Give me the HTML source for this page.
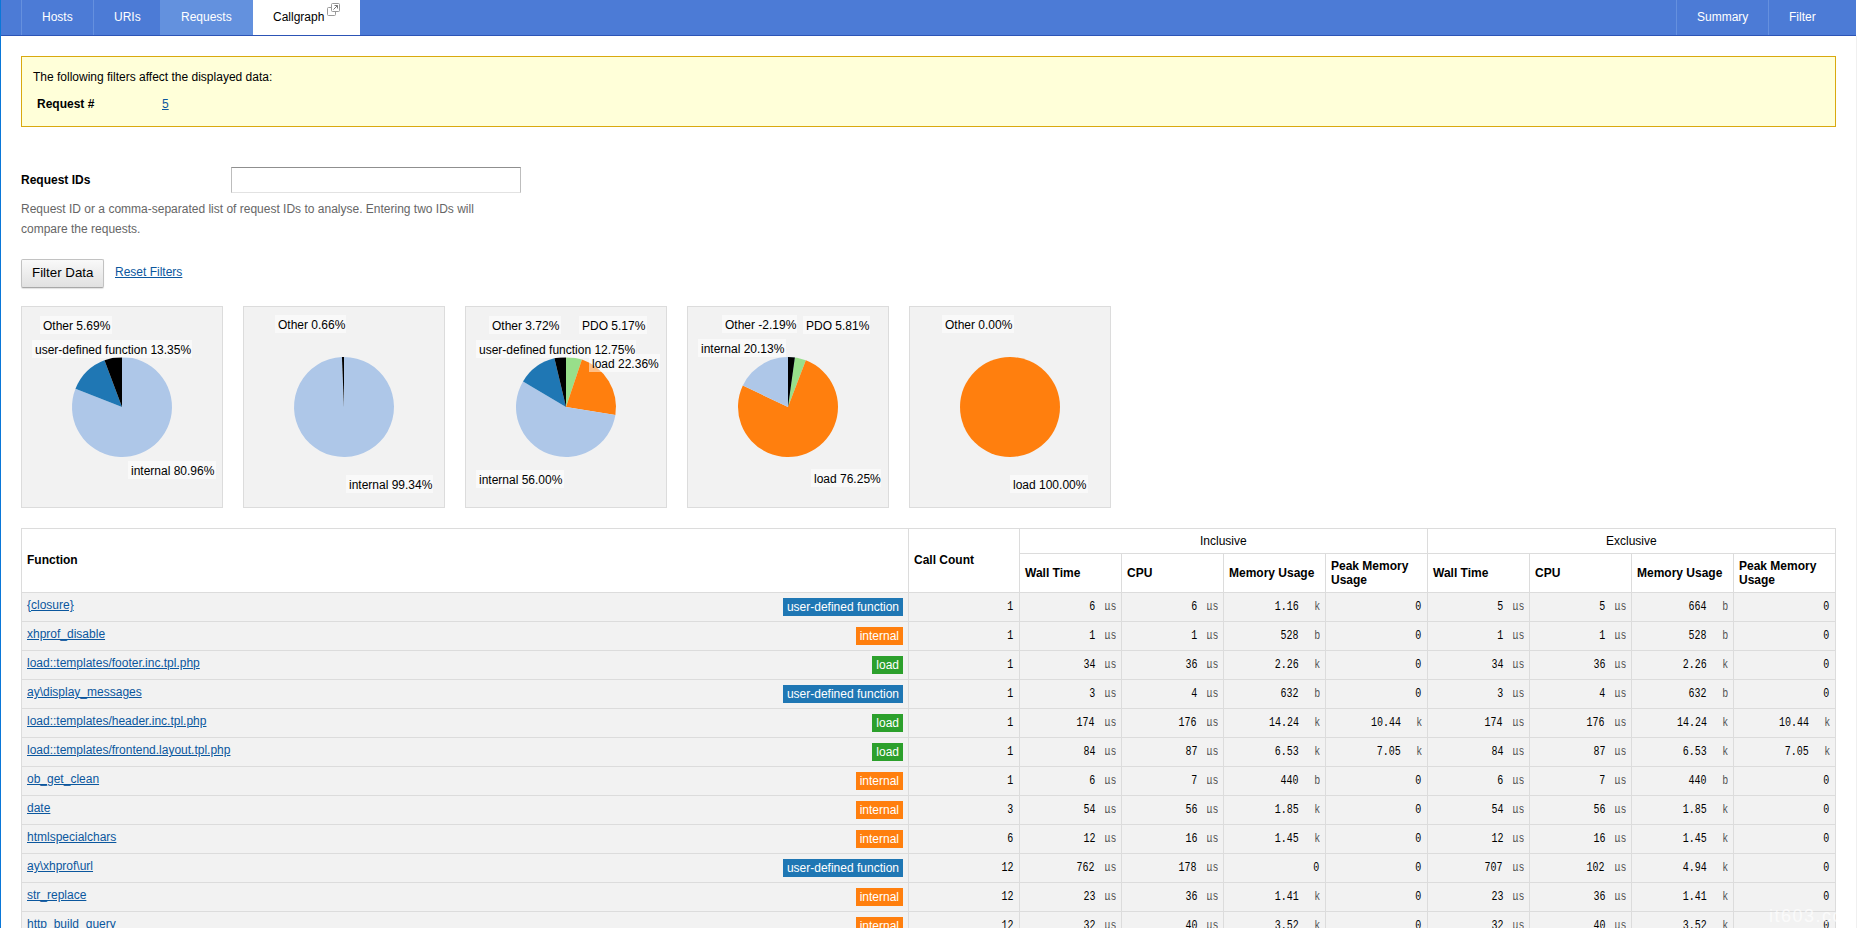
<!DOCTYPE html><html><head><meta charset="utf-8"><style>
*{margin:0;padding:0;box-sizing:border-box}
html,body{width:1857px;height:928px;overflow:hidden;background:#fff}
body{position:relative;font-family:"Liberation Sans", sans-serif;font-size:12px;color:#000}
.a{position:absolute;white-space:nowrap;line-height:14px}
a{color:#0b579e;text-decoration:underline}
.nav{position:absolute;left:1px;top:0;width:1855px;height:36px;background:#4c7bd6;border-bottom:1px solid #2c54b6}
.sep{position:absolute;top:0;width:1px;height:35px;background:#6590de}
.tab{position:absolute;top:10px;color:#fff;line-height:14px}
.yb{position:absolute;left:21px;top:56px;width:1815px;height:71px;background:#ffffd9;border:1px solid #d9a90f}
.chart{position:absolute;top:306px;width:202px;height:202px;background:#f2f2f2;border:1px solid #dcdcdc}
.lbl{position:absolute;height:18px;line-height:18px;padding:0 0 0 3px;background:rgba(255,255,255,0.5);white-space:nowrap;overflow:visible}
.row{position:absolute;left:21px;width:1815px;height:29px;background:#f2f2f2;border-top:1px solid #dcdcdc}
.vl{position:absolute;width:1px;background:#dcdcdc}
.num{position:absolute;font-family:"Liberation Mono", monospace;font-size:12px;transform:scaleX(0.8333);transform-origin:100% 50%;line-height:14px;white-space:nowrap;text-align:right}
.u{position:absolute;font-family:"Liberation Mono", monospace;font-size:12px;transform:scaleX(0.8333);transform-origin:100% 50%;line-height:14px;height:10px;overflow:hidden;color:#555;white-space:nowrap;text-align:right}
.badge{position:absolute;height:18px;line-height:18px;color:#fff;padding:0 4px;white-space:nowrap;font-size:12px}
.th{position:absolute;font-weight:bold;line-height:14px;white-space:nowrap}
</style></head><body><div style="position:absolute;left:0;top:0;width:1px;height:928px;background:#0a77d8"></div><div style="position:absolute;left:1856px;top:36px;width:1px;height:892px;background:#f0f0f0"></div><div class="nav"></div><div class="sep" style="left:21px"></div><div class="sep" style="left:93px"></div><div class="sep" style="left:1676px"></div><div class="sep" style="left:1768px"></div><div style="position:absolute;left:160px;top:0;width:93px;height:35px;background:#6391de"></div><div style="position:absolute;left:253px;top:0;width:107px;height:35px;background:#fff"></div><div class="tab" style="left:42px">Hosts</div><div class="tab" style="left:114px">URIs</div><div class="tab" style="left:181px">Requests</div><div class="tab" style="left:1697px">Summary</div><div class="tab" style="left:1789px">Filter</div><div class="tab" style="left:273px;color:#000">Callgraph</div><svg style="position:absolute;left:326px;top:2px" width="16" height="16" viewBox="0 0 16 16"><rect x="1.5" y="5.5" width="8" height="8" rx="1" fill="#fff" stroke="#999" stroke-width="1"/><rect x="5.5" y="1.5" width="8" height="8" rx="1" fill="#fff" stroke="#999" stroke-width="1"/><path d="M7.5 7.5 L11.5 3.5 M8.5 3.5 H11.5 V6.5" fill="none" stroke="#777" stroke-width="1"/></svg><div class="yb"></div><div class="a" style="left:33px;top:70px">The following filters affect the displayed data:</div><div class="a" style="left:37px;top:97px;font-weight:bold">Request #</div><div class="a" style="left:162px;top:97px"><a>5</a></div><div class="a" style="left:21px;top:173px;font-weight:bold">Request IDs</div><div style="position:absolute;left:231px;top:167px;width:290px;height:26px;border:1px solid #bdbdbd;border-top-color:#8f8f8f;border-bottom-color:#e2e2e2;background:#fff"></div><div class="a" style="left:21px;top:202px;color:#666;line-height:20px;top:199px">Request ID or a comma-separated list of request IDs to analyse. Entering two IDs will<br>compare the requests.</div><div style="position:absolute;left:21px;top:259px;width:83px;height:29px;border:1px solid #c2c2c2;border-bottom-color:#a8a8a8;border-radius:2px;background:linear-gradient(#f9f9f9,#e1e1e1);box-shadow:0 1px 1px rgba(0,0,0,0.12)"></div><div class="a" style="left:32px;top:265px;font-size:13.33px;line-height:16px">Filter Data</div><div class="a" style="left:115px;top:265px"><a>Reset Filters</a></div><div class="chart" style="left:21px"></div><svg style="position:absolute;left:0;top:0" width="1857" height="928"><path d="M122,407 L122.000,357.000 A50,50 0 1 1 75.465,388.711 Z" fill="#aec7e8"/><path d="M122,407 L75.465,388.711 A50,50 0 0 1 104.503,360.162 Z" fill="#1f77b4"/><path d="M122,407 L104.503,360.162 A50,50 0 0 1 122.000,357.000 Z" fill="#000000"/></svg><div class="lbl" style="left:40px;top:316px;width:72px"><span style="position:relative;top:1px">Other 5.69%</span></div><div class="lbl" style="left:32px;top:340px;width:160px"><span style="position:relative;top:1px">user-defined function 13.35%</span></div><div class="lbl" style="left:128px;top:461px;width:88px"><span style="position:relative;top:1px">internal 80.96%</span></div><div class="chart" style="left:243px"></div><svg style="position:absolute;left:0;top:0" width="1857" height="928"><path d="M344,407 L344.000,357.000 A50,50 0 1 1 341.927,357.043 Z" fill="#aec7e8"/><path d="M344,407 L341.927,357.043 A50,50 0 0 1 344.000,357.000 Z" fill="#000000"/></svg><div class="lbl" style="left:275px;top:315px;width:71px"><span style="position:relative;top:1px">Other 0.66%</span></div><div class="lbl" style="left:346px;top:475px;width:87px"><span style="position:relative;top:1px">internal 99.34%</span></div><div class="chart" style="left:465px"></div><svg style="position:absolute;left:0;top:0" width="1857" height="928"><path d="M566,407 L566.000,357.000 A50,50 0 0 1 581.958,359.615 Z" fill="#98df8a"/><path d="M566,407 L581.958,359.615 A50,50 0 0 1 615.370,414.915 Z" fill="#ff7f0e"/><path d="M566,407 L615.370,414.915 A50,50 0 1 1 523.011,381.467 Z" fill="#aec7e8"/><path d="M566,407 L523.011,381.467 A50,50 0 0 1 554.419,358.360 Z" fill="#1f77b4"/><path d="M566,407 L554.419,358.360 A50,50 0 0 1 566.000,357.000 Z" fill="#000000"/></svg><div class="lbl" style="left:489px;top:316px;width:72px"><span style="position:relative;top:1px">Other 3.72%</span></div><div class="lbl" style="left:579px;top:316px;width:68px"><span style="position:relative;top:1px">PDO 5.17%</span></div><div class="lbl" style="left:476px;top:340px;width:160px"><span style="position:relative;top:1px">user-defined function 12.75%</span></div><div class="lbl" style="left:589px;top:354px;width:71px"><span style="position:relative;top:1px">load 22.36%</span></div><div class="lbl" style="left:476px;top:470px;width:88px"><span style="position:relative;top:1px">internal 56.00%</span></div><div class="chart" style="left:687px"></div><svg style="position:absolute;left:0;top:0" width="1857" height="928"><path d="M788,407 L788.000,357.000 A50,50 0 0 1 805.850,360.295 Z" fill="#98df8a"/><path d="M788,407 L805.850,360.295 A50,50 0 1 1 742.839,385.541 Z" fill="#ff7f0e"/><path d="M788,407 L742.839,385.541 A50,50 0 0 1 794.858,357.473 Z" fill="#aec7e8"/><path d="M788,407 L788.000,357.000 A50,50 0 0 1 794.858,357.473 Z" fill="#000000"/></svg><div class="lbl" style="left:722px;top:315px;width:75px"><span style="position:relative;top:1px">Other -2.19%</span></div><div class="lbl" style="left:803px;top:316px;width:67px"><span style="position:relative;top:1px">PDO 5.81%</span></div><div class="lbl" style="left:698px;top:339px;width:88px"><span style="position:relative;top:1px">internal 20.13%</span></div><div class="lbl" style="left:811px;top:469px;width:70px"><span style="position:relative;top:1px">load 76.25%</span></div><div class="chart" style="left:909px"></div><svg style="position:absolute;left:0;top:0" width="1857" height="928"><circle cx="1010" cy="407" r="50" fill="#ff7f0e"/></svg><div class="lbl" style="left:942px;top:315px;width:72px"><span style="position:relative;top:1px">Other 0.00%</span></div><div class="lbl" style="left:1010px;top:475px;width:78px"><span style="position:relative;top:1px">load 100.00%</span></div><div style="position:absolute;left:21px;top:528px;width:1815px;height:64px;border:1px solid #dcdcdc;border-bottom:none;background:#fff"></div><div class="vl" style="left:908px;top:528px;height:64px"></div><div class="vl" style="left:1019px;top:528px;height:64px"></div><div class="vl" style="left:1427px;top:528px;height:64px"></div><div class="vl" style="left:1121px;top:553px;height:39px"></div><div class="vl" style="left:1223px;top:553px;height:39px"></div><div class="vl" style="left:1325px;top:553px;height:39px"></div><div class="vl" style="left:1529px;top:553px;height:39px"></div><div class="vl" style="left:1631px;top:553px;height:39px"></div><div class="vl" style="left:1733px;top:553px;height:39px"></div><div style="position:absolute;left:1019px;top:553px;width:816px;height:1px;background:#dcdcdc"></div><div class="a" style="left:1200px;top:534px">Inclusive</div><div class="a" style="left:1606px;top:534px">Exclusive</div><div class="th" style="left:27px;top:553px">Function</div><div class="th" style="left:914px;top:553px">Call Count</div><div class="th" style="left:1025px;top:566px">Wall Time</div><div class="th" style="left:1127px;top:566px">CPU</div><div class="th" style="left:1229px;top:566px">Memory Usage</div><div class="th" style="left:1331px;top:559px;line-height:14px">Peak Memory<br>Usage</div><div class="th" style="left:1433px;top:566px">Wall Time</div><div class="th" style="left:1535px;top:566px">CPU</div><div class="th" style="left:1637px;top:566px">Memory Usage</div><div class="th" style="left:1739px;top:559px;line-height:14px">Peak Memory<br>Usage</div><div class="row" style="top:592px"></div><div class="a" style="left:27px;top:598px"><a>{closure}</a></div><div class="badge" style="right:954px;top:598px;background:#1f77b4">user-defined function</div><div class="num" style="right:844px;top:600px">1</div><div class="num" style="right:762px;top:600px">6</div><div class="u" style="right:741px;top:600px">μs</div><div class="num" style="right:660px;top:600px">6</div><div class="u" style="right:639px;top:600px">μs</div><div class="num" style="right:558px;top:600px">1.16</div><div class="u" style="right:537px;top:600px">k</div><div class="num" style="right:436px;top:600px">0</div><div class="num" style="right:354px;top:600px">5</div><div class="u" style="right:333px;top:600px">μs</div><div class="num" style="right:252px;top:600px">5</div><div class="u" style="right:231px;top:600px">μs</div><div class="num" style="right:150px;top:600px">664</div><div class="u" style="right:129px;top:600px">b</div><div class="num" style="right:28px;top:600px">0</div><div class="row" style="top:621px"></div><div class="a" style="left:27px;top:627px"><a>xhprof_disable</a></div><div class="badge" style="right:954px;top:627px;background:#ff7f0e">internal</div><div class="num" style="right:844px;top:629px">1</div><div class="num" style="right:762px;top:629px">1</div><div class="u" style="right:741px;top:629px">μs</div><div class="num" style="right:660px;top:629px">1</div><div class="u" style="right:639px;top:629px">μs</div><div class="num" style="right:558px;top:629px">528</div><div class="u" style="right:537px;top:629px">b</div><div class="num" style="right:436px;top:629px">0</div><div class="num" style="right:354px;top:629px">1</div><div class="u" style="right:333px;top:629px">μs</div><div class="num" style="right:252px;top:629px">1</div><div class="u" style="right:231px;top:629px">μs</div><div class="num" style="right:150px;top:629px">528</div><div class="u" style="right:129px;top:629px">b</div><div class="num" style="right:28px;top:629px">0</div><div class="row" style="top:650px"></div><div class="a" style="left:27px;top:656px"><a>load::templates/footer.inc.tpl.php</a></div><div class="badge" style="right:954px;top:656px;background:#2ca02c">load</div><div class="num" style="right:844px;top:658px">1</div><div class="num" style="right:762px;top:658px">34</div><div class="u" style="right:741px;top:658px">μs</div><div class="num" style="right:660px;top:658px">36</div><div class="u" style="right:639px;top:658px">μs</div><div class="num" style="right:558px;top:658px">2.26</div><div class="u" style="right:537px;top:658px">k</div><div class="num" style="right:436px;top:658px">0</div><div class="num" style="right:354px;top:658px">34</div><div class="u" style="right:333px;top:658px">μs</div><div class="num" style="right:252px;top:658px">36</div><div class="u" style="right:231px;top:658px">μs</div><div class="num" style="right:150px;top:658px">2.26</div><div class="u" style="right:129px;top:658px">k</div><div class="num" style="right:28px;top:658px">0</div><div class="row" style="top:679px"></div><div class="a" style="left:27px;top:685px"><a>ay\display_messages</a></div><div class="badge" style="right:954px;top:685px;background:#1f77b4">user-defined function</div><div class="num" style="right:844px;top:687px">1</div><div class="num" style="right:762px;top:687px">3</div><div class="u" style="right:741px;top:687px">μs</div><div class="num" style="right:660px;top:687px">4</div><div class="u" style="right:639px;top:687px">μs</div><div class="num" style="right:558px;top:687px">632</div><div class="u" style="right:537px;top:687px">b</div><div class="num" style="right:436px;top:687px">0</div><div class="num" style="right:354px;top:687px">3</div><div class="u" style="right:333px;top:687px">μs</div><div class="num" style="right:252px;top:687px">4</div><div class="u" style="right:231px;top:687px">μs</div><div class="num" style="right:150px;top:687px">632</div><div class="u" style="right:129px;top:687px">b</div><div class="num" style="right:28px;top:687px">0</div><div class="row" style="top:708px"></div><div class="a" style="left:27px;top:714px"><a>load::templates/header.inc.tpl.php</a></div><div class="badge" style="right:954px;top:714px;background:#2ca02c">load</div><div class="num" style="right:844px;top:716px">1</div><div class="num" style="right:762px;top:716px">174</div><div class="u" style="right:741px;top:716px">μs</div><div class="num" style="right:660px;top:716px">176</div><div class="u" style="right:639px;top:716px">μs</div><div class="num" style="right:558px;top:716px">14.24</div><div class="u" style="right:537px;top:716px">k</div><div class="num" style="right:456px;top:716px">10.44</div><div class="u" style="right:435px;top:716px">k</div><div class="num" style="right:354px;top:716px">174</div><div class="u" style="right:333px;top:716px">μs</div><div class="num" style="right:252px;top:716px">176</div><div class="u" style="right:231px;top:716px">μs</div><div class="num" style="right:150px;top:716px">14.24</div><div class="u" style="right:129px;top:716px">k</div><div class="num" style="right:48px;top:716px">10.44</div><div class="u" style="right:27px;top:716px">k</div><div class="row" style="top:737px"></div><div class="a" style="left:27px;top:743px"><a>load::templates/frontend.layout.tpl.php</a></div><div class="badge" style="right:954px;top:743px;background:#2ca02c">load</div><div class="num" style="right:844px;top:745px">1</div><div class="num" style="right:762px;top:745px">84</div><div class="u" style="right:741px;top:745px">μs</div><div class="num" style="right:660px;top:745px">87</div><div class="u" style="right:639px;top:745px">μs</div><div class="num" style="right:558px;top:745px">6.53</div><div class="u" style="right:537px;top:745px">k</div><div class="num" style="right:456px;top:745px">7.05</div><div class="u" style="right:435px;top:745px">k</div><div class="num" style="right:354px;top:745px">84</div><div class="u" style="right:333px;top:745px">μs</div><div class="num" style="right:252px;top:745px">87</div><div class="u" style="right:231px;top:745px">μs</div><div class="num" style="right:150px;top:745px">6.53</div><div class="u" style="right:129px;top:745px">k</div><div class="num" style="right:48px;top:745px">7.05</div><div class="u" style="right:27px;top:745px">k</div><div class="row" style="top:766px"></div><div class="a" style="left:27px;top:772px"><a>ob_get_clean</a></div><div class="badge" style="right:954px;top:772px;background:#ff7f0e">internal</div><div class="num" style="right:844px;top:774px">1</div><div class="num" style="right:762px;top:774px">6</div><div class="u" style="right:741px;top:774px">μs</div><div class="num" style="right:660px;top:774px">7</div><div class="u" style="right:639px;top:774px">μs</div><div class="num" style="right:558px;top:774px">440</div><div class="u" style="right:537px;top:774px">b</div><div class="num" style="right:436px;top:774px">0</div><div class="num" style="right:354px;top:774px">6</div><div class="u" style="right:333px;top:774px">μs</div><div class="num" style="right:252px;top:774px">7</div><div class="u" style="right:231px;top:774px">μs</div><div class="num" style="right:150px;top:774px">440</div><div class="u" style="right:129px;top:774px">b</div><div class="num" style="right:28px;top:774px">0</div><div class="row" style="top:795px"></div><div class="a" style="left:27px;top:801px"><a>date</a></div><div class="badge" style="right:954px;top:801px;background:#ff7f0e">internal</div><div class="num" style="right:844px;top:803px">3</div><div class="num" style="right:762px;top:803px">54</div><div class="u" style="right:741px;top:803px">μs</div><div class="num" style="right:660px;top:803px">56</div><div class="u" style="right:639px;top:803px">μs</div><div class="num" style="right:558px;top:803px">1.85</div><div class="u" style="right:537px;top:803px">k</div><div class="num" style="right:436px;top:803px">0</div><div class="num" style="right:354px;top:803px">54</div><div class="u" style="right:333px;top:803px">μs</div><div class="num" style="right:252px;top:803px">56</div><div class="u" style="right:231px;top:803px">μs</div><div class="num" style="right:150px;top:803px">1.85</div><div class="u" style="right:129px;top:803px">k</div><div class="num" style="right:28px;top:803px">0</div><div class="row" style="top:824px"></div><div class="a" style="left:27px;top:830px"><a>htmlspecialchars</a></div><div class="badge" style="right:954px;top:830px;background:#ff7f0e">internal</div><div class="num" style="right:844px;top:832px">6</div><div class="num" style="right:762px;top:832px">12</div><div class="u" style="right:741px;top:832px">μs</div><div class="num" style="right:660px;top:832px">16</div><div class="u" style="right:639px;top:832px">μs</div><div class="num" style="right:558px;top:832px">1.45</div><div class="u" style="right:537px;top:832px">k</div><div class="num" style="right:436px;top:832px">0</div><div class="num" style="right:354px;top:832px">12</div><div class="u" style="right:333px;top:832px">μs</div><div class="num" style="right:252px;top:832px">16</div><div class="u" style="right:231px;top:832px">μs</div><div class="num" style="right:150px;top:832px">1.45</div><div class="u" style="right:129px;top:832px">k</div><div class="num" style="right:28px;top:832px">0</div><div class="row" style="top:853px"></div><div class="a" style="left:27px;top:859px"><a>ay\xhprof\url</a></div><div class="badge" style="right:954px;top:859px;background:#1f77b4">user-defined function</div><div class="num" style="right:844px;top:861px">12</div><div class="num" style="right:762px;top:861px">762</div><div class="u" style="right:741px;top:861px">μs</div><div class="num" style="right:660px;top:861px">178</div><div class="u" style="right:639px;top:861px">μs</div><div class="num" style="right:538px;top:861px">0</div><div class="num" style="right:436px;top:861px">0</div><div class="num" style="right:354px;top:861px">707</div><div class="u" style="right:333px;top:861px">μs</div><div class="num" style="right:252px;top:861px">102</div><div class="u" style="right:231px;top:861px">μs</div><div class="num" style="right:150px;top:861px">4.94</div><div class="u" style="right:129px;top:861px">k</div><div class="num" style="right:28px;top:861px">0</div><div class="row" style="top:882px"></div><div class="a" style="left:27px;top:888px"><a>str_replace</a></div><div class="badge" style="right:954px;top:888px;background:#ff7f0e">internal</div><div class="num" style="right:844px;top:890px">12</div><div class="num" style="right:762px;top:890px">23</div><div class="u" style="right:741px;top:890px">μs</div><div class="num" style="right:660px;top:890px">36</div><div class="u" style="right:639px;top:890px">μs</div><div class="num" style="right:558px;top:890px">1.41</div><div class="u" style="right:537px;top:890px">k</div><div class="num" style="right:436px;top:890px">0</div><div class="num" style="right:354px;top:890px">23</div><div class="u" style="right:333px;top:890px">μs</div><div class="num" style="right:252px;top:890px">36</div><div class="u" style="right:231px;top:890px">μs</div><div class="num" style="right:150px;top:890px">1.41</div><div class="u" style="right:129px;top:890px">k</div><div class="num" style="right:28px;top:890px">0</div><div class="row" style="top:911px"></div><div class="a" style="left:27px;top:917px"><a>http_build_query</a></div><div class="badge" style="right:954px;top:917px;background:#ff7f0e">internal</div><div class="num" style="right:844px;top:919px">12</div><div class="num" style="right:762px;top:919px">32</div><div class="u" style="right:741px;top:919px">μs</div><div class="num" style="right:660px;top:919px">40</div><div class="u" style="right:639px;top:919px">μs</div><div class="num" style="right:558px;top:919px">3.52</div><div class="u" style="right:537px;top:919px">k</div><div class="num" style="right:436px;top:919px">0</div><div class="num" style="right:354px;top:919px">32</div><div class="u" style="right:333px;top:919px">μs</div><div class="num" style="right:252px;top:919px">40</div><div class="u" style="right:231px;top:919px">μs</div><div class="num" style="right:150px;top:919px">3.52</div><div class="u" style="right:129px;top:919px">k</div><div class="num" style="right:28px;top:919px">0</div><div class="vl" style="left:21px;top:592px;height:336px"></div><div class="vl" style="left:908px;top:592px;height:336px"></div><div class="vl" style="left:1019px;top:592px;height:336px"></div><div class="vl" style="left:1121px;top:592px;height:336px"></div><div class="vl" style="left:1223px;top:592px;height:336px"></div><div class="vl" style="left:1325px;top:592px;height:336px"></div><div class="vl" style="left:1427px;top:592px;height:336px"></div><div class="vl" style="left:1529px;top:592px;height:336px"></div><div class="vl" style="left:1631px;top:592px;height:336px"></div><div class="vl" style="left:1733px;top:592px;height:336px"></div><div class="vl" style="left:1835px;top:592px;height:336px"></div><div style="position:absolute;left:1769px;top:906px;font-size:18px;letter-spacing:1.5px;line-height:20px;color:rgba(255,255,255,0.7);white-space:nowrap">it603.cc</div></body></html>
